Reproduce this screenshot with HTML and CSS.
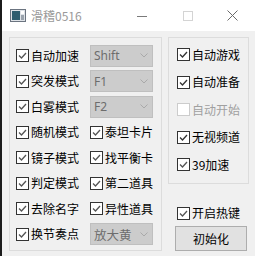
FILE: index.html
```html
<!DOCTYPE html>
<html lang="zh">
<head>
<meta charset="utf-8">
<link rel="stylesheet" href="styles.css">
</head>
<body>
<div class="window">
  <div class="titlebar">
    <svg class="app-icon" width="16" height="13" viewBox="0 0 16 13">
      <rect x="0.5" y="0.5" width="15" height="12" fill="#dfe3e8" stroke="#6b7480"/>
      <rect x="2" y="2" width="8" height="9" fill="#2f5d6f"/>
      <rect x="11" y="2" width="3" height="3" fill="#ffffff"/>
      <rect x="11" y="6" width="3" height="5" fill="#9aa3ad"/>
    </svg>
    <span class="title">滑稽0516</span>
    <div class="controls">
      <div class="ctl ctl-min"><svg width="10" height="10" viewBox="0 0 10 10"><line x1="0" y1="5.5" x2="10" y2="5.5" stroke="#7a7a7a" stroke-width="1"/></svg></div>
      <div class="ctl"><svg width="10" height="10" viewBox="0 0 10 10"><rect x="0.5" y="0.5" width="9" height="9" fill="none" stroke="#d4d4d4"/></svg></div>
      <div class="ctl"><svg width="11" height="11" viewBox="0 0 11 11"><path d="M0.5 0.5 L10.5 10.5 M10.5 0.5 L0.5 10.5" stroke="#6a6a6a" stroke-width="1"/></svg></div>
    </div>
  </div>
  <div class="content">
    <div class="group group-main">
      <label class="cb"><span class="box"><svg viewBox="0 0 11 11"><path d="M2 5.5 L4.5 8 L9 3"/></svg></span>自动加速</label>
      <div class="combo"><span class="latin">Shift</span><svg class="arrow" width="8" height="5" viewBox="0 0 8 5"><path d="M0.5 0.5 L4 4 L7.5 0.5"/></svg></div>
      <label class="cb"><span class="box"><svg viewBox="0 0 11 11"><path d="M2 5.5 L4.5 8 L9 3"/></svg></span>突发模式</label>
      <div class="combo"><span class="latin">F1</span><svg class="arrow" width="8" height="5" viewBox="0 0 8 5"><path d="M0.5 0.5 L4 4 L7.5 0.5"/></svg></div>
      <label class="cb"><span class="box"><svg viewBox="0 0 11 11"><path d="M2 5.5 L4.5 8 L9 3"/></svg></span>白雾模式</label>
      <div class="combo"><span class="latin">F2</span><svg class="arrow" width="8" height="5" viewBox="0 0 8 5"><path d="M0.5 0.5 L4 4 L7.5 0.5"/></svg></div>
      <label class="cb"><span class="box"><svg viewBox="0 0 11 11"><path d="M2 5.5 L4.5 8 L9 3"/></svg></span>随机模式</label>
      <label class="cb"><span class="box"><svg viewBox="0 0 11 11"><path d="M2 5.5 L4.5 8 L9 3"/></svg></span>泰坦卡片</label>
      <label class="cb"><span class="box"><svg viewBox="0 0 11 11"><path d="M2 5.5 L4.5 8 L9 3"/></svg></span>镜子模式</label>
      <label class="cb"><span class="box"><svg viewBox="0 0 11 11"><path d="M2 5.5 L4.5 8 L9 3"/></svg></span>找平衡卡</label>
      <label class="cb"><span class="box"><svg viewBox="0 0 11 11"><path d="M2 5.5 L4.5 8 L9 3"/></svg></span>判定模式</label>
      <label class="cb"><span class="box"><svg viewBox="0 0 11 11"><path d="M2 5.5 L4.5 8 L9 3"/></svg></span>第二道具</label>
      <label class="cb"><span class="box"><svg viewBox="0 0 11 11"><path d="M2 5.5 L4.5 8 L9 3"/></svg></span>去除名字</label>
      <label class="cb"><span class="box"><svg viewBox="0 0 11 11"><path d="M2 5.5 L4.5 8 L9 3"/></svg></span>异性道具</label>
      <label class="cb"><span class="box"><svg viewBox="0 0 11 11"><path d="M2 5.5 L4.5 8 L9 3"/></svg></span>换节奏点</label>
      <div class="combo"><span class="cjk-val">放大黄</span><svg class="arrow" width="8" height="5" viewBox="0 0 8 5"><path d="M0.5 0.5 L4 4 L7.5 0.5"/></svg></div>
    </div>
    <div class="side">
      <div class="group group-side">
        <label class="cb"><span class="box dark"><svg viewBox="0 0 11 11"><path d="M2 5.5 L4.5 8 L9 3"/></svg></span>自动游戏</label>
        <label class="cb"><span class="box dark"><svg viewBox="0 0 11 11"><path d="M2 5.5 L4.5 8 L9 3"/></svg></span>自动准备</label>
        <label class="cb disabled"><span class="box"></span>自动开始</label>
        <label class="cb"><span class="box dark"><svg viewBox="0 0 11 11"><path d="M2 5.5 L4.5 8 L9 3"/></svg></span>无视频道</label>
        <label class="cb"><span class="box"><svg viewBox="0 0 11 11"><path d="M2 5.5 L4.5 8 L9 3"/></svg></span>39加速</label>
      </div>
      <label class="cb hotkey"><span class="box"><svg viewBox="0 0 11 11"><path d="M2 5.5 L4.5 8 L9 3"/></svg></span>开启热键</label>
      <div class="button">初始化</div>
    </div>
  </div>
</div>
</body>
</html>
```

FILE: styles.css
```css
html, body {
  margin: 0;
  padding: 0;
}
body {
  width: 255px;
  height: 256px;
  overflow: hidden;
  background: #f0f0f0;
  font-family: "Noto Sans CJK SC", "Microsoft YaHei", sans-serif;
  font-size: 12px;
  color: #000;
}
.window {
  box-sizing: border-box;
  height: 256px;
  border-left: 2px solid #1b1b1b;
  display: flex;
  flex-direction: column;
}
.titlebar {
  height: 31px;
  background: #ffffff;
  display: flex;
  align-items: center;
  flex: none;
}
.app-icon {
  margin-left: 8px;
  flex: none;
}
.title {
  margin-left: 5px;
  color: #9a9a9a;
  font-family: "Noto Sans CJK SC", sans-serif;
  font-size: 12px;
  line-height: 16px;
}
.controls {
  margin-left: auto;
  display: flex;
  height: 31px;
}
.ctl {
  width: 45px;
  display: flex;
  align-items: center;
  justify-content: center;
}
.ctl-min {
  width: 46px;
}
.content {
  display: flex;
  padding: 6px 0 0 7px;
  gap: 6px;
}
.group {
  box-sizing: border-box;
  border: 1px solid #dcdcdc;
}
.group-main {
  width: 153px;
  height: 214px;
  padding: 5px 0 0 6px;
  display: grid;
  grid-template-columns: 74px 63px;
  grid-auto-rows: 25.5px;
  align-items: center;
}
.cb {
  display: flex;
  align-items: center;
  gap: 2px;
  line-height: 16px;
  white-space: nowrap;
}
.box {
  box-sizing: border-box;
  width: 13px;
  height: 13px;
  border: 1px solid #333333;
  background: #ffffff;
  display: flex;
  align-items: center;
  justify-content: center;
  flex: none;
}
.box svg {
  width: 11px;
  height: 11px;
}
.box path {
  fill: none;
  stroke: #555555;
  stroke-width: 1.3;
}
.box.dark path {
  stroke: #333333;
}
.cb.disabled {
  color: #a0a0a0;
}
.cb.disabled .box {
  border-color: #cccccc;
}
.combo {
  box-sizing: border-box;
  width: 63px;
  height: 22px;
  background: #cccccc;
  border: 1px solid #bfbfbf;
  color: #6d6d6d;
  display: flex;
  align-items: center;
  justify-content: space-between;
  padding: 0 4px 0 3px;
}
.latin {
  font-family: "Noto Sans", "Open Sans", sans-serif;
  font-size: 12px;
}
.cjk-val {
  font-size: 12.5px;
}
.arrow path {
  fill: none;
  stroke: #a9a9a9;
  stroke-width: 1;
}
.side {
  width: 81px;
  display: flex;
  flex-direction: column;
}
.group-side {
  height: 147px;
  padding: 3px 0 0 8px;
  display: grid;
  grid-auto-rows: 27.5px;
  align-items: center;
}
.hotkey {
  margin-top: 21px;
  padding-left: 9px;
  height: 16px;
}
.button {
  box-sizing: border-box;
  margin: 5px 0 0 7px;
  width: 72px;
  height: 25px;
  background: #e1e1e1;
  border: 1px solid #adadad;
  display: flex;
  align-items: center;
  justify-content: center;
}
```
